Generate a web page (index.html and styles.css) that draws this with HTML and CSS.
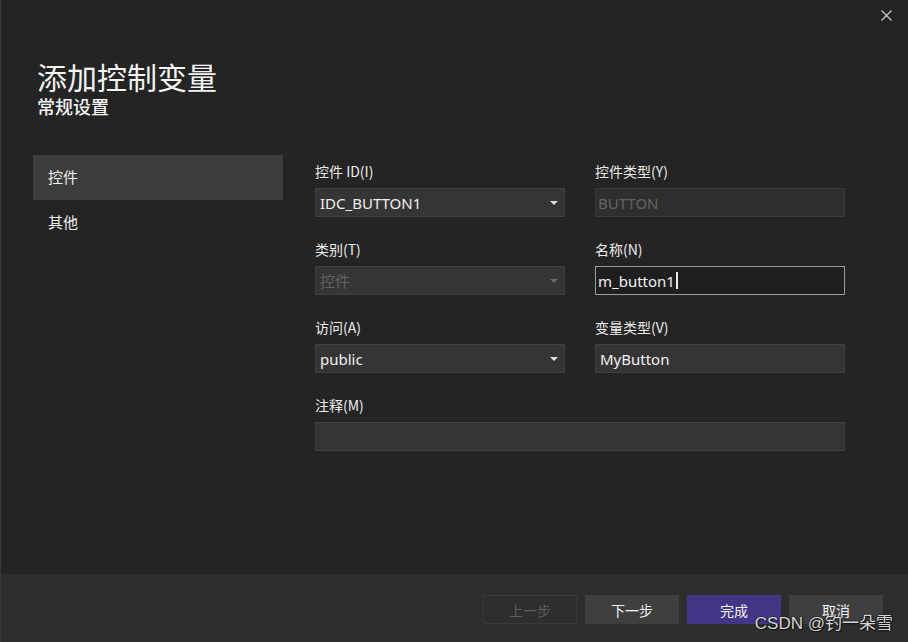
FILE: index.html
```html
<!DOCTYPE html>
<html lang="zh-CN">
<head>
<meta charset="utf-8">
<title>添加控制变量</title>
<link rel="stylesheet" href="styles.css">
</head>
<body>
<div class="dialog">
  <div class="main">
    <button class="close" aria-label="关闭">
      <svg width="11" height="11" viewBox="0 0 11 11"><path d="M0.5 0.5 L10.5 10.5 M10.5 0.5 L0.5 10.5" stroke="#c8c8c8" stroke-width="1.3"/></svg>
    </button>
    <header class="header">
      <h1 class="title">添加控制变量</h1>
      <h2 class="subtitle">常规设置</h2>
    </header>
    <div class="content">
      <nav class="nav">
        <div class="nav-item active">控件</div>
        <div class="nav-item">其他</div>
      </nav>
      <form class="form">
        <div class="field">
          <label class="label">控件 ID(I)</label>
          <div class="input select"><span>IDC_BUTTON1</span><i class="arrow"></i></div>
        </div>
        <div class="field">
          <label class="label">控件类型(Y)</label>
          <div class="input disabled-text"><span>BUTTON</span></div>
        </div>
        <div class="field">
          <label class="label">类别(T)</label>
          <div class="input select disabled"><span>控件</span><i class="arrow dim"></i></div>
        </div>
        <div class="field">
          <label class="label">名称(N)</label>
          <div class="input focused"><span>m_button1</span><i class="caret"></i></div>
        </div>
        <div class="field">
          <label class="label">访问(A)</label>
          <div class="input select"><span>public</span><i class="arrow"></i></div>
        </div>
        <div class="field">
          <label class="label">变量类型(V)</label>
          <div class="input"><span>MyButton</span></div>
        </div>
        <div class="field wide">
          <label class="label">注释(M)</label>
          <div class="input"></div>
        </div>
      </form>
    </div>
  </div>
  <footer class="footer">
    <button class="btn btn-disabled">上一步</button>
    <button class="btn">下一步</button>
    <button class="btn btn-primary">完成</button>
    <button class="btn">取消</button>
  </footer>
  <div class="watermark">CSDN @钓一朵雪</div>
</div>
</body>
</html>
```
FILE: styles.css
```css
* { box-sizing: border-box; }
html, body { margin: 0; padding: 0; }
body {
  width: 908px;
  height: 642px;
  background: #242424;
  font-family: "Noto Sans", "Noto Sans CJK SC", sans-serif;
  color: #f0f0f0;
  overflow: hidden;
}
.dialog {
  position: relative;
  width: 908px;
  height: 642px;
  display: flex;
  flex-direction: column;
  border-left: 1px solid #3a3a3a;
}
.main {
  flex: 1;
  position: relative;
}
.close {
  position: absolute;
  top: 9px;
  right: 15px;
  width: 13px;
  height: 13px;
  padding: 1px;
  border: 0;
  background: transparent;
  display: flex;
}
.header {
  padding: 59px 0 0 36px;
}
.title {
  margin: 0;
  font-family: "Noto Sans CJK SC", sans-serif;
  font-size: 30px;
  font-weight: 400;
  line-height: 34px;
  color: #f4f4f4;
}
.subtitle {
  margin: 1px 0 0;
  font-family: "Noto Sans CJK SC", sans-serif;
  font-size: 18px;
  font-weight: 500;
  line-height: 24px;
  color: #f4f4f4;
}
.content {
  display: flex;
  gap: 32px;
  margin-top: 37px;
  padding-left: 32px;
}
.nav {
  width: 250px;
  display: flex;
  flex-direction: column;
}
.nav-item {
  height: 45px;
  display: flex;
  align-items: center;
  padding-left: 15px;
  padding-bottom: 2px;
  font-family: "Noto Sans CJK SC", sans-serif;
  font-size: 15px;
  color: #f0f0f0;
}
.nav-item.active { background: #3d3d3d; }
.form {
  display: grid;
  grid-template-columns: 250px 250px;
  column-gap: 30px;
  row-gap: 22px;
  padding-top: 6px;
  margin: 0;
}
.field {
  display: flex;
  flex-direction: column;
  gap: 7px;
}
.field.wide { grid-column: 1 / 3; }
.label {
  font-family: "Noto Sans CJK SC", sans-serif;
  font-size: 14px;
  line-height: 20px;
  color: #ececec;
}
.input {
  height: 29px;
  background: #353535;
  border: 1px solid #414141;
  display: flex;
  align-items: center;
  padding: 0 4px;
  font-size: 15px;
  color: #f0f0f0;
  position: relative;
}
.input span { line-height: 20px; }
.select { justify-content: space-between; padding-right: 6px; }
.arrow {
  width: 0;
  height: 0;
  border-left: 4px solid transparent;
  border-right: 4px solid transparent;
  border-top: 4px solid #e0e0e0;
}
.arrow.dim { border-top-color: #6a6a6a; }
.disabled { color: #626262; }
.disabled span { font-family: "Noto Sans CJK SC", sans-serif; }
.disabled-text {
  background: #2f2f2f;
  border-color: #3a3a3a;
  color: #636363;
  padding-left: 2px;
}
.focused {
  background: #1f1f1f;
  border-color: #9b9b9b;
  padding-left: 2px;
}
.caret {
  width: 2px;
  height: 17px;
  margin-left: 1px;
  background: #e8e8e8;
}
.footer {
  height: 68px;
  background: #2e2e2e;
  display: flex;
  justify-content: flex-end;
  align-items: flex-start;
  gap: 8px;
  padding: 21px 25px 0 0;
}
.btn {
  width: 94px;
  height: 29px;
  border: 1px solid #3f3f3f;
  background: #3f3f3f;
  color: #f4f4f4;
  font-family: "Noto Sans CJK SC", sans-serif;
  font-size: 14px;
  padding: 0;
}
.btn-disabled {
  background: transparent;
  border-color: #3a3a3a;
  color: #5c5c5c;
}
.btn-primary {
  background: #433687;
  border-color: #433687;
}
.watermark {
  position: absolute;
  right: 15px;
  bottom: 8px;
  font-family: "Liberation Sans", "Noto Sans CJK SC", sans-serif;
  font-size: 17px;
  line-height: 20px;
  color: #d6d6d6;
  text-shadow: 1px 1px 1px #111, 0 0 2px #000;
}
```
